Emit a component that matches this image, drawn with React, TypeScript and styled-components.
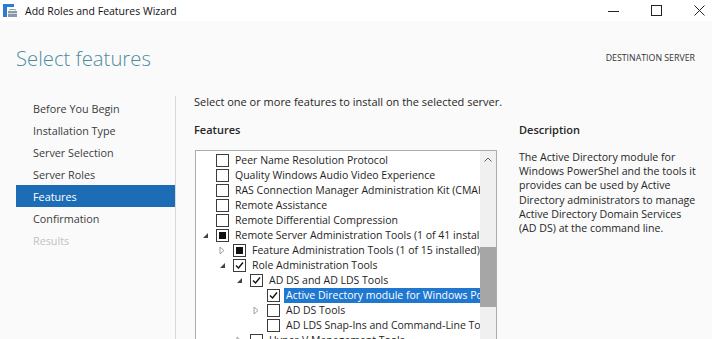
import React from "react";
import styled, { createGlobalStyle } from "styled-components";

const Global = createGlobalStyle`
  html, body { margin: 0; padding: 0; background: #fafafa; }
  body { font-family: "Open Sans", "Noto Sans", sans-serif; color: #1e1e1e; }
  * { box-sizing: border-box; }
`;

const Window = styled.div`
  width: 712px;
  height: 339px;
  overflow: hidden;
  display: flex;
  flex-direction: column;
  background: #fafafa;
`;

const TitleBar = styled.div`
  height: 21px;
  flex: none;
  background: #ffffff;
  display: flex;
  align-items: center;
  padding-left: 3px;
`;

const TitleText = styled.span`
  font-size: 10.5px;
  margin-left: 8px;
  color: #111;
`;

const Controls = styled.div`
  margin-left: auto;
  display: flex;
  align-items: center;
  gap: 32px;
  padding-right: 7px;
`;

const Glyph = styled.svg`
  width: 11px;
  height: 11px;
  display: block;
`;

const Header = styled.div`
  height: 75px;
  flex: none;
  display: flex;
  align-items: flex-start;
  justify-content: space-between;
  padding: 22px 17px 0 16px;
`;

const PageTitle = styled.h1`
  margin: 0;
  font-weight: 300;
  font-size: 20.3px;
  line-height: 30px;
  color: #4a8da0;
`;

const DestLabel = styled.div`
  font-size: 8.8px;
  color: #333;
  margin-top: 9px;
`;

const Main = styled.div`
  flex: 1;
  display: flex;
  min-height: 0;
`;

const Nav = styled.nav`
  width: 176px;
  flex: none;
  border-right: 1px solid #d9d9d9;
  padding: 1px 0 0 16px;
  display: flex;
  flex-direction: column;
`;

const NavItem = styled.div<{ $active?: boolean; $disabled?: boolean }>`
  height: 22px;
  display: flex;
  align-items: center;
  padding-left: 17px;
  font-size: 10.8px;
  background: ${(p) => (p.$active ? "#1c6db6" : "transparent")};
  color: ${(p) => (p.$active ? "#ffffff" : p.$disabled ? "#c2c2c2" : "#3a3a3a")};
`;

const Content = styled.div`
  flex: 1;
  padding: 0 0 0 18px;
  display: flex;
  flex-direction: column;
  min-width: 0;
`;

const Intro = styled.div`
  font-size: 11px;
  line-height: 14px;
  height: 14px;
  margin-top: -1px;
  color: #262626;
`;

const Columns = styled.div`
  display: flex;
  margin-top: 14px;
  flex: 1;
  min-height: 0;
`;

const LeftCol = styled.div`
  width: 303px;
  flex: none;
  display: flex;
  flex-direction: column;
`;

const SectionLabel = styled.div`
  font-size: 11px;
  font-weight: 600;
  line-height: 14px;
  height: 27px;
  color: #262626;
`;

const TreeBox = styled.div`
  flex: 1;
  margin-left: 1px;
  border: 1px solid #acacac;
  border-bottom: none;
  background: #ffffff;
  display: flex;
  min-height: 0;
  overflow: hidden;
`;

const Rows = styled.div`
  flex: 1;
  padding-top: 2px;
  overflow: hidden;
  min-width: 0;
`;

const Row = styled.div<{ $level: number }>`
  height: 15px;
  display: flex;
  align-items: center;
  padding-left: ${(p) => 2 + p.$level * 17}px;
  white-space: nowrap;
  font-size: 10.5px;
`;

const Expander = styled.span`
  width: 14px;
  height: 15px;
  flex: none;
  display: flex;
  align-items: center;
  justify-content: center;
`;

const Box = styled.span`
  width: 13px;
  height: 13px;
  flex: none;
  margin-left: 4px;
  border: 1px solid #3c3c3c;
  background: #ffffff;
  display: flex;
  align-items: center;
  justify-content: center;
`;

const Indeterminate = styled.span`
  width: 7px;
  height: 7px;
  background: #111;
`;

const Label = styled.span<{ $selected?: boolean }>`
  margin-left: 4px;
  padding: 0 2px;
  height: 15px;
  line-height: 15px;
  flex: 1;
  overflow: hidden;
  color: ${(p) => (p.$selected ? "#ffffff" : "#1e1e1e")};
  background: ${(p) => (p.$selected ? "#1f77d0" : "transparent")};
`;

const ScrollBar = styled.div`
  width: 16px;
  flex: none;
  background: #f0f0f0;
  display: flex;
  flex-direction: column;
  align-items: center;
`;

const ScrollArrow = styled.svg`
  width: 8px;
  height: 5px;
  margin-top: 6px;
  display: block;
`;

const Thumb = styled.div`
  width: 16px;
  height: 60px;
  margin-top: 85px;
  background: #a6a6a6;
`;

const RightCol = styled.div`
  margin-left: 22px;
  display: flex;
  flex-direction: column;
`;

const DescText = styled.div`
  font-size: 10.6px;
  line-height: 14.2px;
  color: #262626;
  white-space: nowrap;
`;

type Check = "none" | "checked" | "partial";
type Exp = "none" | "open" | "closed";

type Item = { level: number; exp: Exp; check: Check; text: string; selected?: boolean };

const items: Item[] = [
  { level: 0, exp: "none", check: "none", text: "Peer Name Resolution Protocol" },
  { level: 0, exp: "none", check: "none", text: "Quality Windows Audio Video Experience" },
  { level: 0, exp: "none", check: "none", text: "RAS Connection Manager Administration Kit (CMAK)" },
  { level: 0, exp: "none", check: "none", text: "Remote Assistance" },
  { level: 0, exp: "none", check: "none", text: "Remote Differential Compression" },
  { level: 0, exp: "open", check: "partial", text: "Remote Server Administration Tools (1 of 41 installed)" },
  { level: 1, exp: "closed", check: "partial", text: "Feature Administration Tools (1 of 15 installed)" },
  { level: 1, exp: "open", check: "checked", text: "Role Administration Tools" },
  { level: 2, exp: "open", check: "checked", text: "AD DS and AD LDS Tools" },
  { level: 3, exp: "none", check: "checked", text: "Active Directory module for Windows PowerShell", selected: true },
  { level: 3, exp: "closed", check: "none", text: "AD DS Tools" },
  { level: 3, exp: "none", check: "none", text: "AD LDS Snap-Ins and Command-Line Tools" },
  { level: 2, exp: "closed", check: "none", text: "Hyper-V Management Tools" },
];

const navItems = [
  "Before You Begin",
  "Installation Type",
  "Server Selection",
  "Server Roles",
  "Features",
  "Confirmation",
  "Results",
];

const desc = [
  "The Active Directory module for",
  "Windows PowerShel and the tools it",
  "provides can be used by Active",
  "Directory administrators to manage",
  "Active Directory Domain Services",
  "(AD DS) at the command line.",
];

function ExpIcon({ exp }: { exp: Exp }) {
  if (exp === "open")
    return (
      <svg width="7" height="7" viewBox="0 0 7 7">
        <path d="M6 1 L6 6 L1 6 Z" fill="#444" />
      </svg>
    );
  if (exp === "closed")
    return (
      <svg width="6" height="9" viewBox="0 0 6 9">
        <path d="M1 1 L5 4.5 L1 8 Z" fill="none" stroke="#a0a0a0" strokeWidth="1" />
      </svg>
    );
  return null;
}

function CheckMark() {
  return (
    <svg width="11" height="11" viewBox="0 0 11 11">
      <path d="M2 5.5 L4.5 8 L9 2.5" fill="none" stroke="#111" strokeWidth="1.4" />
    </svg>
  );
}

function AppIcon() {
  return (
    <svg width="14" height="15" viewBox="0 0 14 15">
      <rect x="0" y="1" width="4" height="13" fill="#2b7cd3" />
      <rect x="0" y="1" width="11" height="3" fill="#2b7cd3" />
      <rect x="5" y="8" width="9" height="6" fill="#8a9aa8" />
      <rect x="7" y="6.5" width="5" height="2" fill="none" stroke="#8a9aa8" strokeWidth="1" />
      <rect x="5" y="10" width="9" height="1" fill="#cfd8df" />
    </svg>
  );
}

export default function App() {
  return (
    <>
      <Global />
      <Window>
        <TitleBar>
          <AppIcon />
          <TitleText>Add Roles and Features Wizard</TitleText>
          <Controls>
            <Glyph viewBox="0 0 11 11">
              <path d="M0 6.5 H11" stroke="#222" strokeWidth="1" />
            </Glyph>
            <Glyph viewBox="0 0 11 11">
              <rect x="0.5" y="0.5" width="10" height="10" fill="none" stroke="#222" strokeWidth="1" />
            </Glyph>
            <Glyph viewBox="0 0 11 11">
              <path d="M0.5 0.5 L10.5 10.5 M10.5 0.5 L0.5 10.5" stroke="#222" strokeWidth="1" />
            </Glyph>
          </Controls>
        </TitleBar>
        <Header>
          <PageTitle>Select features</PageTitle>
          <DestLabel>DESTINATION SERVER</DestLabel>
        </Header>
        <Main>
          <Nav>
            {navItems.map((n) => (
              <NavItem key={n} $active={n === "Features"} $disabled={n === "Results"}>
                {n}
              </NavItem>
            ))}
          </Nav>
          <Content>
            <Intro>Select one or more features to install on the selected server.</Intro>
            <Columns>
              <LeftCol>
                <SectionLabel>Features</SectionLabel>
                <TreeBox>
                  <Rows>
                    {items.map((it, i) => (
                      <Row key={i} $level={it.level}>
                        <Expander>
                          <ExpIcon exp={it.exp} />
                        </Expander>
                        <Box>
                          {it.check === "checked" && <CheckMark />}
                          {it.check === "partial" && <Indeterminate />}
                        </Box>
                        <Label $selected={it.selected}>{it.text}</Label>
                      </Row>
                    ))}
                  </Rows>
                  <ScrollBar>
                    <ScrollArrow viewBox="0 0 8 5">
                      <path d="M0.5 4.5 L4 1 L7.5 4.5" fill="none" stroke="#606060" strokeWidth="1" />
                    </ScrollArrow>
                    <Thumb />
                  </ScrollBar>
                </TreeBox>
              </LeftCol>
              <RightCol>
                <SectionLabel>Description</SectionLabel>
                <div>
                  {desc.map((d) => (
                    <DescText key={d}>{d}</DescText>
                  ))}
                </div>
              </RightCol>
            </Columns>
          </Content>
        </Main>
      </Window>
    </>
  );
}
